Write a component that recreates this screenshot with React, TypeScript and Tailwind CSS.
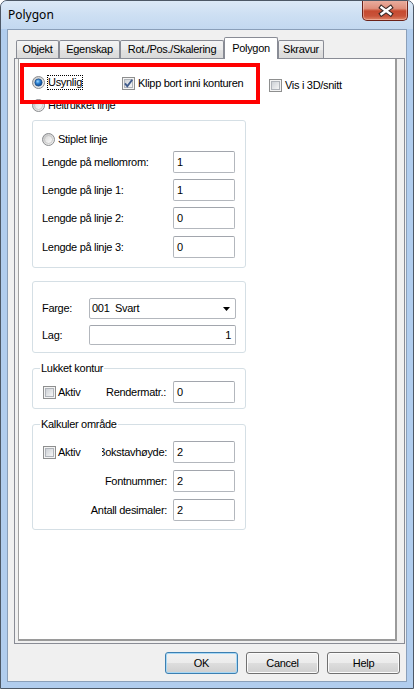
import React from "react";

function Radio({ checked = false }: { checked?: boolean }) {
  return (
    <svg width="13" height="13" viewBox="0 0 13 13" className="block shrink-0">
      <defs>
        <linearGradient id="rOuter" x1="0" y1="0" x2="1" y2="1">
          <stop offset="0" stopColor="#c4c4c4" />
          <stop offset="1" stopColor="#f7f7f7" />
        </linearGradient>
        <linearGradient id="rInner" x1="0" y1="0" x2="1" y2="1">
          <stop offset="0" stopColor="#d6d6d6" />
          <stop offset="1" stopColor="#fdfdfd" />
        </linearGradient>
        <radialGradient id="rDot" cx="0.4" cy="0.35" r="0.7">
          <stop offset="0" stopColor="#9ad6ff" />
          <stop offset="0.45" stopColor="#2a7fd0" />
          <stop offset="1" stopColor="#0b3d82" />
        </radialGradient>
      </defs>
      <circle cx="6.5" cy="6.5" r="6" fill="url(#rOuter)" stroke="#8b8d90" strokeWidth="1" />
      <circle
        cx="6.5"
        cy="6.5"
        r={checked ? 3.6 : 4}
        fill={checked ? "url(#rDot)" : "url(#rInner)"}
        stroke={checked ? "#1d4f8a" : "#c2c2c2"}
        strokeWidth="0.8"
      />
    </svg>
  );
}

function Check({ checked = false }: { checked?: boolean }) {
  return (
    <svg width="13" height="13" viewBox="0 0 13 13" className="block shrink-0">
      <defs>
        <linearGradient id="cbIn" x1="0" y1="0" x2="1" y2="1">
          <stop offset="0" stopColor="#cbcfd4" />
          <stop offset="1" stopColor="#f8f8f8" />
        </linearGradient>
      </defs>
      <rect x="0.5" y="0.5" width="12" height="12" fill="#f4f4f4" stroke="#8e8f8f" />
      <rect x="2.5" y="2.5" width="8" height="8" fill="url(#cbIn)" stroke="#b0b4ba" />
      {checked && (
        <path d="M3 6.4 L5.3 9.3 L10.2 2.8" fill="none" stroke="#3f5b8c" strokeWidth="1.9" />
      )}
    </svg>
  );
}

function TextBox({ value, className }: { value: string; className: string }) {
  return (
    <div
      className={
        "flex items-center bg-white border border-[#b3b7bd] border-t-[#a2a6ad] rounded-[2px] pl-[3px] " +
        className
      }
    >
      {value}
    </div>
  );
}

function Group({
  title,
  className,
  children,
}: {
  title?: string;
  className: string;
  children: React.ReactNode;
}) {
  return (
    <div className={"relative ml-[13px] w-[214px] rounded-[3px] border border-[#d5dfe5] flex flex-col " + className}>
      {title && (
        <span className="absolute left-[7px] top-[-8px] bg-white px-[1px] leading-[14px] whitespace-nowrap">
          {title}
        </span>
      )}
      {children}
    </div>
  );
}

function LenRow({ label, value, mt }: { label: string; value: string; mt: string }) {
  return (
    <div className={"flex items-center ml-[9px] h-[22px] " + mt}>
      <span className="w-[131px] whitespace-nowrap">{label}</span>
      <TextBox value={value} className="w-[62px] h-[22px]" />
    </div>
  );
}

function Tab({ label, w, selected = false }: { label: string; w: string; selected?: boolean }) {
  if (selected) {
    return (
      <div
        className={
          "relative z-10 -mb-[1px] h-[22px] bg-white border border-b-0 border-[#898c95] rounded-t-[2px] flex items-center justify-center " +
          w
        }
      >
        {label}
      </div>
    );
  }
  return (
    <div
      className={
        "h-[18px] border border-b-0 border-[#898c95] rounded-t-[2px] flex items-center justify-center bg-[linear-gradient(to_bottom,#f4f4f4_0%,#ececec_50%,#e2e2e2_51%,#dadada_100%)] " +
        w
      }
    >
      {label}
    </div>
  );
}

function Btn({ label, def = false }: { label: string; def?: boolean }) {
  return (
    <div
      className={
        "w-[73px] h-[22px] rounded-[3px] border flex items-center justify-center bg-[linear-gradient(to_bottom,#f2f2f2_0%,#ebebeb_50%,#dddddd_51%,#cfcfcf_100%)] " +
        (def
          ? "border-[#3c7fb1] shadow-[inset_0_0_0_1px_#a8d8f5]"
          : "border-[#707070] shadow-[inset_0_0_0_1px_#fbfbfb]")
      }
    >
      {label}
    </div>
  );
}

export default function App() {
  return (
    <div className="w-[414px] h-[689px] flex flex-col bg-[#b1cdee] border border-[#4d5866] rounded-t-[7px] overflow-hidden font-['Liberation_Sans',Arial,sans-serif] text-[11px] tracking-[-0.3px] text-black">
      {/* title bar */}
      <div className="h-[28px] shrink-0 flex items-start justify-between bg-[linear-gradient(to_bottom,#dce9f7_0%,#cddff3_50%,#c3d8f0_100%)]">
        <span className="ml-[7px] mt-[6px] font-['Noto_Sans',sans-serif] text-[12px] tracking-normal leading-[16px]">
          Polygon
        </span>
        <div className="-mt-[1px] mr-[5px] w-[46px] h-[21px] rounded-b-[5px] border border-t-0 border-[#6b2219] bg-[linear-gradient(to_bottom,#eab0a2_0%,#df8f7c_42%,#c64a30_55%,#c8533a_80%,#df8567_100%)] shadow-[inset_0_0_0_1px_rgba(255,220,210,0.45)]">
          <svg width="44" height="20" viewBox="0 0 44 20" className="block">
            <path d="M18.5 7.5 L27.5 14 M27.5 7.5 L18.5 14" stroke="#3a2a28" strokeWidth="4.6" strokeLinecap="square" fill="none" />
            <path d="M18.5 7.5 L27.5 14 M27.5 7.5 L18.5 14" stroke="#ffffff" strokeWidth="2.4" strokeLinecap="square" fill="none" />
          </svg>
        </div>
      </div>

      {/* body */}
      <div className="flex-1 flex px-[6px] pb-[6px]">
        <div className="flex-1 flex flex-col bg-[#f0f0f0] border border-[#8a9fb9]">
          {/* tab control */}
          <div className="ml-[6px] w-[391px] pt-[7px] flex flex-col">
            <div className="flex items-end h-[21px] pl-[2px]">
              <Tab label="Objekt" w="w-[43px]" />
              <Tab label="Egenskap" w="w-[61px]" />
              <Tab label="Rot./Pos./Skalering" w="w-[104px]" />
              <Tab label="Polygon" w="w-[54px]" selected />
              <Tab label="Skravur" w="w-[46px]" />
            </div>
            <div className="h-[586px] border border-[#898c95] bg-[#f0f0f0] pl-[3px] flex flex-col">
              {/* child panel */}
              <div className="relative w-[379px] h-[582px] bg-white border-l border-l-[#a0a0a0] border-r-2 border-r-[#9a9a9a] border-b-2 border-b-[#9a9a9a] flex flex-col">
                {/* row 1 */}
                <div className="mt-[17px] ml-[13px] flex items-start h-[16px]">
                  <div className="w-[90px] h-[13px] flex items-center">
                    <Radio checked />
                    <span className="ml-[2px] border border-dotted border-black leading-[13px] whitespace-nowrap">
                      Usynlig
                    </span>
                  </div>
                  <div className="w-[147px] h-[13px] mt-[1px] flex items-center">
                    <Check checked />
                    <span className="ml-[3px] whitespace-nowrap">Klipp bort inni konturen</span>
                  </div>
                  <div className="h-[13px] mt-[3px] flex items-center">
                    <Check />
                    <span className="ml-[3px] whitespace-nowrap">Vis i 3D/snitt</span>
                  </div>
                </div>

                {/* row 2 */}
                <div className="mt-[7px] ml-[13px] h-[13px] flex items-center">
                  <Radio />
                  <span className="ml-[3px] whitespace-nowrap">Heltrukket linje</span>
                </div>

                {/* group 1 */}
                <Group className="mt-[8px] h-[148px] shrink-0">
                  <div className="ml-[9px] mt-[12px] h-[13px] flex items-center">
                    <Radio />
                    <span className="ml-[3px] whitespace-nowrap">Stiplet linje</span>
                  </div>
                  <LenRow label="Lengde på mellomrom:" value="1" mt="mt-[5px]" />
                  <LenRow label="Lengde på linje 1:" value="1" mt="mt-[6px]" />
                  <LenRow label="Lengde på linje 2:" value="0" mt="mt-[6px]" />
                  <LenRow label="Lengde på linje 3:" value="0" mt="mt-[7px]" />
                </Group>

                {/* group 2 */}
                <Group className="mt-[13px] h-[72px] shrink-0">
                  <div className="mt-[16px] ml-[9px] h-[21px] flex items-center">
                    <span className="w-[47px]">Farge:</span>
                    <div className="w-[147px] h-[21px] bg-white border border-[#b3b7bd] rounded-[2px] flex items-center justify-between pl-[2px] pr-[5px]">
                      <span className="whitespace-pre">001  Svart</span>
                      <svg width="7" height="4" viewBox="0 0 7 4" className="block">
                        <polygon points="0,0 7,0 3.5,4" fill="#000" />
                      </svg>
                    </div>
                  </div>
                  <div className="mt-[6px] ml-[9px] h-[20px] flex items-center">
                    <span className="w-[47px]">Lag:</span>
                    <div className="w-[147px] h-[20px] bg-white border border-[#b3b7bd] border-t-[#a2a6ad] rounded-[2px] flex items-center justify-end pr-[4px]">
                      1
                    </div>
                  </div>
                </Group>

                {/* group 3 */}
                <Group title="Lukket kontur" className="mt-[15px] h-[41px] shrink-0">
                  <div className="mt-[12px] ml-[10px] h-[22px] flex items-center">
                    <div className="w-[63px] flex items-center">
                      <Check />
                      <span className="ml-[2px]">Aktiv</span>
                    </div>
                    <span className="w-[67px] whitespace-nowrap">Rendermatr.:</span>
                    <TextBox value="0" className="w-[62px] h-[22px]" />
                  </div>
                </Group>

                {/* group 4 */}
                <Group title="Kalkuler område" className="mt-[15px] h-[106px] shrink-0">
                  <div className="mt-[16px] ml-[10px] h-[22px] flex items-center">
                    <div className="w-[59px] flex items-center">
                      <Check />
                      <span className="ml-[2px]">Aktiv</span>
                    </div>
                    <div className="w-[71px] overflow-hidden flex justify-end pr-[6px]">
                      <span className="whitespace-nowrap shrink-0">Bokstavhøyde:</span>
                    </div>
                    <TextBox value="2" className="w-[62px] h-[22px]" />
                  </div>
                  <div className="mt-[7px] ml-[10px] h-[22px] flex items-center">
                    <div className="w-[130px] flex justify-end pr-[6px]">
                      <span className="whitespace-nowrap">Fontnummer:</span>
                    </div>
                    <TextBox value="2" className="w-[62px] h-[22px]" />
                  </div>
                  <div className="mt-[7px] ml-[10px] h-[22px] flex items-center">
                    <div className="w-[130px] flex justify-end pr-[6px]">
                      <span className="whitespace-nowrap">Antall desimaler:</span>
                    </div>
                    <TextBox value="2" className="w-[62px] h-[22px]" />
                  </div>
                </Group>

                {/* red annotation rectangle */}
                <div className="absolute left-[1px] top-[4px] w-[240px] h-[41px] border-[4px] border-[#ff0000] pointer-events-none" />
              </div>
            </div>
          </div>

          {/* buttons */}
          <div className="mt-[8px] flex justify-end gap-[8px] pr-[6px]">
            <Btn label="OK" def />
            <Btn label="Cancel" />
            <Btn label="Help" />
          </div>
        </div>
      </div>
    </div>
  );
}
